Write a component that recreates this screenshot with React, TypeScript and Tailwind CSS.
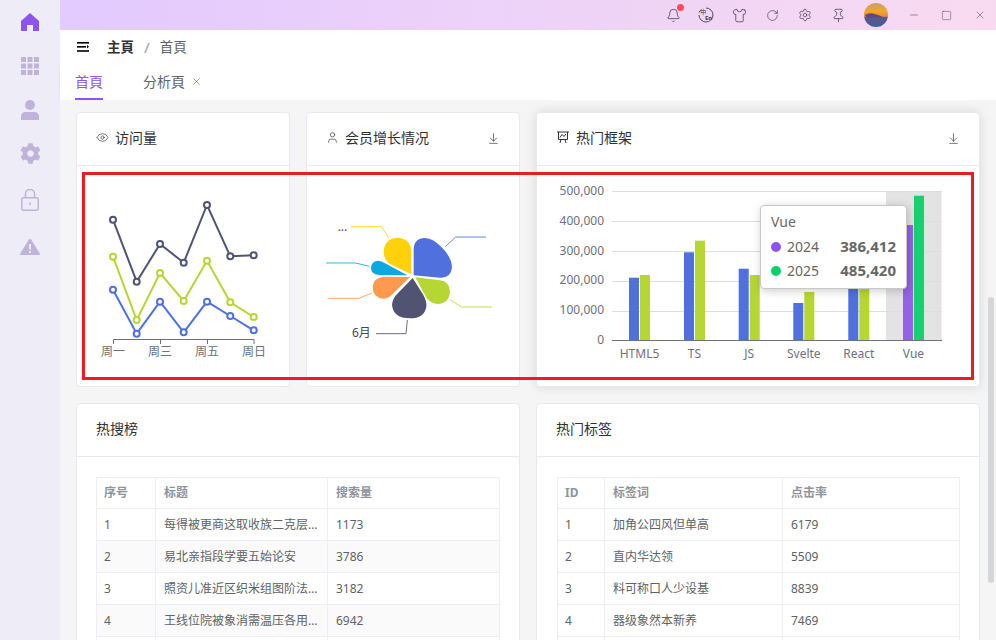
import type { ReactNode } from 'react'
import { ArrowDownToLine, Bell, Eye, Minus, Pin, RotateCw, Settings, Shirt, Square, User, X } from 'lucide-react'
import { FaCog } from 'react-icons/fa'

const lineSeries = [
    { color: '#4f5475', pts: [[113, 219.7], [136.7, 281.7], [160, 244], [183.7, 262.7], [207, 205], [230.3, 256.3], [253.7, 255.3]] },
    { color: '#b6d634', pts: [[113, 256.7], [136.7, 320], [160, 273], [183.7, 301], [207, 260.7], [230.3, 302.3], [253.7, 317]] },
    { color: '#4f70e0', pts: [[113, 289.7], [136.7, 333.7], [160, 301.7], [183.7, 332.3], [207, 301.7], [230.3, 316], [253.7, 330.3]] },
]

const petals = [
    { color: '#5070dd', d: 'M326 316 L326 240 Q326 205 360 204 Q385 205 410 232 Q440 262 441 292 Q438 325 405 323 Z' },
    { color: '#b6d634', d: 'M331 322 L405 331 Q435 336 435 366 Q432 400 398 402 Q380 402 365 385 Z' },
    { color: '#505372', d: 'M323 324 L355 375 Q366 395 364 410 Q358 445 315 445 Q265 445 261 405 Q262 385 280 368 Z' },
    { color: '#ff994d', d: 'M315 321 L265 370 Q250 387 235 386 Q204 384 203 352 Q205 322 237 320 Z' },
    { color: '#0ca8df', d: 'M307 316 L222 315 Q198 312 198 293 Q200 272 220 272 Q228 273 240 280 Z' },
    { color: '#ffd10a', d: 'M319 313 L255 282 Q236 268 236 245 Q238 206 277 203 Q317 205 319 245 Z' },
]

const pieLabels = [
    { color: '#5070dd', pts: '421,230 452,201 543,201' },
    { color: '#b6d634', pts: '436,390 470,411 561,411' },
    { color: '#505372', pts: '307,450 303,491 213,491' },
    { color: '#ff994d', pts: '200,369 162,385 70,385' },
    { color: '#0ca8df', pts: '193,289 152,279 63,279' },
    { color: '#ffd10a', pts: '252,205 230,170 138,170' },
]

const bars = [
    { name: 'HTML5', x: 629, a: 277.7, b: 275 },
    { name: 'TS', x: 684, a: 252.3, b: 240.7 },
    { name: 'JS', x: 738.7, a: 268.7, b: 275 },
    { name: 'Svelte', x: 793.3, a: 303, b: 292 },
    { name: 'React', x: 848.3, a: 258, b: 262 },
]

const hotSearch = [
    ['1', '每得被更商这取收族二克层次方法', '1173'],
    ['2', '易北亲指段学要五始论安', '3786'],
    ['3', '照资儿准近区织米组图阶法则件系', '3182'],
    ['4', '王线位院被象消需温压各用世界的', '6942'],
]

const hotTags = [
    ['1', '加角公四风但单高', '6179'],
    ['2', '直内华达领', '5509'],
    ['3', '料可称口人少设基', '8839'],
    ['4', '器级象然本新养', '7469'],
]

function Card({ icon, title, download, hover, children }: { icon?: ReactNode; title: string; download?: boolean; hover?: boolean; children: ReactNode }) {
    return (
        <div className={`bg-white border border-[#e8e8f1] rounded-[4px] ${hover ? 'shadow-[0_0_12px_rgba(0,0,0,0.12)]' : ''}`}>
            <div className="h-[53px] border-b border-[#e8e8f1] pl-[19px] pr-[19px] pb-[4px] flex items-center justify-between text-[14px] text-[#303133]">
                <div className="flex items-center gap-[6px]">
                    {icon}
                    <span>{title}</span>
                </div>
                {download && <ArrowDownToLine size={13} strokeWidth={1.3} className="text-[#404040] mt-[2px]" />}
            </div>
            {children}
        </div>
    )
}

function DataTable({ head, rows, widths, striped }: { head: string[]; rows: string[][]; widths: string[]; striped?: boolean }) {
    return (
        <table className="w-full table-fixed border-collapse text-[12px] text-[#606266]">
            <colgroup>
                {widths.map(w => <col key={w} className={w} />)}
            </colgroup>
            <thead>
                <tr className="h-[31px]">
                    {head.map(h => <th key={h} className="border border-[#ebeef5] px-2 first:pl-[7px] text-left font-bold text-[#909399]">{h}</th>)}
                </tr>
            </thead>
            <tbody>
                {rows.map((r, i) => (
                    <tr key={r[0]} className={`h-8 ${striped && i % 2 === 1 ? 'bg-[#fafafa]' : ''}`}>
                        {r.map((c, j) => <td key={j} className="border border-[#ebeef5] px-2 first:pl-[7px] truncate">{c}</td>)}
                    </tr>
                ))}
                <tr className="h-8">
                    {head.map(h => <td key={h} className="border border-[#ebeef5]" />)}
                </tr>
            </tbody>
        </table>
    )
}

function LineChart() {
    return (
        <svg viewBox="77 166 212 220" className="block w-full h-[220px]">
            {lineSeries.map(s => (
                <g key={s.color}>
                    <polyline points={s.pts.map(p => p.join(',')).join(' ')} fill="none" stroke={s.color} strokeWidth="2" />
                    {s.pts.map(p => <circle key={p[0]} cx={p[0]} cy={p[1]} r="3" fill="#fff" stroke={s.color} strokeWidth="2" />)}
                </g>
            ))}
            <path d="M113.5 344 V339.5 H254 V344 M160.5 339.5 V344 M207.5 339.5 V344" fill="none" stroke="#6e7079" />
            {[['周一', 113], ['周三', 160], ['周五', 207], ['周日', 254]].map(([t, x]) => (
                <text key={t} x={x} y="356" textAnchor="middle" fontSize="12" fill="#6e7079">{t}</text>
            ))}
        </svg>
    )
}

function RoseChart() {
    return (
        <svg viewBox="6 -12 636 660" className="block w-full h-[220px]">
            {pieLabels.map(l => <polyline key={l.color} points={l.pts} fill="none" stroke={l.color} strokeWidth="3" opacity="0.85" />)}
            {petals.map(p => <path key={p.color} d={p.d} fill={p.color} />)}
            <text x="141" y="501" fontSize="36" fill="#464646">6月</text>
            <text x="98" y="183" fontSize="36" fill="#464646">...</text>
        </svg>
    )
}

function BarChart() {
    return (
        <div className="relative">
            <svg viewBox="537 166 442 220" className="block w-full h-[220px]">
                <rect x="886" y="191" width="55.5" height="149" fill="#e3e3e3" />
                {[191.5, 221.5, 251.5, 281.5, 311.5].map(y => <line key={y} x1="612" x2="942" y1={y} y2={y} stroke="#dbdce6" />)}
                {bars.map(b => (
                    <g key={b.name}>
                        <rect x={b.x} y={b.a} width="10" height={340 - b.a} fill="#5070dd" />
                        <rect x={b.x + 11} y={b.b} width="10" height={340 - b.b} fill="#b6d634" />
                        <text x={b.x + 10.5} y="358" textAnchor="middle" fontSize="12" fill="#6e7079">{b.name}</text>
                    </g>
                ))}
                <rect x="903" y="225" width="10" height="115" fill="#9462e8" />
                <rect x="914" y="195.7" width="10" height="144.3" fill="#18d070" />
                <text x="913.5" y="358" textAnchor="middle" fontSize="12" fill="#6e7079">Vue</text>
                <line x1="612" x2="942" y1="340.5" y2="340.5" stroke="#6e7079" />
                {['500,000', '400,000', '300,000', '200,000', '100,000', '0'].map((t, i) => (
                    <text key={t} x="604" y={195.3 + i * 29.7} textAnchor="end" fontSize="12" fill="#6e7079">{t}</text>
                ))}
            </svg>
            <div className="absolute left-[223px] top-[39px] w-[147px] h-[84px] bg-white border border-[#c8c8c8] rounded-[4px] shadow-[1px_2px_10px_rgba(0,0,0,0.2)] px-[10px] pt-[5px] text-[14px] leading-[21px] text-[#666]">
                <div>Vue</div>
                <div className="flex items-center mt-[4px]">
                    <span className="w-[10px] h-[10px] rounded-full bg-[#8b55ee] mr-[6px]" />
                    <span>2024</span>
                    <span className="ml-auto font-bold text-[15px]">386,412</span>
                </div>
                <div className="flex items-center mt-[3px]">
                    <span className="w-[10px] h-[10px] rounded-full bg-[#0bd068] mr-[6px]" />
                    <span>2025</span>
                    <span className="ml-auto font-bold text-[15px]">485,420</span>
                </div>
            </div>
        </div>
    )
}

function TopIcon({ children }: { children: ReactNode }) {
    return <div className="relative w-[33px] h-[30px] flex items-center justify-center text-[#3f3a48]">{children}</div>
}

export default function App() {
    return (
        <div className="relative flex w-[996px] h-[640px] overflow-hidden font-['Noto_Sans','Noto_Sans_CJK_SC',sans-serif]">
            {/* Sidebar */}
            <aside className="w-[60px] shrink-0 bg-[#eeedf7] flex flex-col items-center pt-[13px] text-[#bfb3da]">
                <svg viewBox="0 0 18 18" className="w-[18px] h-[18px] text-[#8b55ee]" fill="currentColor">
                    <path d="M9 0 L18 8 V18 H12 V12 H6 V18 H0 V8 Z" />
                </svg>
                <svg viewBox="0 0 18 18" className="w-[18px] h-[18px] mt-[26px]" fill="currentColor">
                    {[0, 6.5, 13].map(y => [0, 6.5, 13].map(x => <rect key={`${x}-${y}`} x={x} y={y} width="5" height="5" />))}
                </svg>
                <svg viewBox="0 0 18 20" className="w-[18px] h-[20px] mt-[25px]" fill="currentColor">
                    <circle cx="9" cy="5" r="5" />
                    <path d="M0 17 Q0 12 5 12 H13 Q18 12 18 17 V20 H0 Z" />
                </svg>
                <FaCog size={21} className="mt-[23px]" />
                <svg viewBox="0 0 18 22" className="w-[18px] h-[22px] mt-[25px]" fill="none" stroke="currentColor" strokeWidth="1.5">
                    <rect x="0.75" y="8.75" width="16.5" height="12.5" rx="2" />
                    <path d="M4.5 8.5 V5 A4.5 4.5 0 0 1 13.5 5 V8.5" />
                    <path d="M9 13.5 V16" />
                </svg>
                <svg viewBox="0 0 20 16" className="w-5 h-4 mt-[28px]" fill="currentColor">
                    <path fillRule="evenodd" d="M10 0 Q10.8 0 11.3 0.8 L19.8 14.6 Q20.2 16 18.8 16 H1.2 Q-0.2 16 0.2 14.6 L8.7 0.8 Q9.2 0 10 0 Z M9 5 V10.5 H11 V5 Z M9 12 V14 H11 V12 Z" />
                </svg>
            </aside>

            <div className="flex-1 min-w-0 flex flex-col">
                {/* Title bar */}
                <header className="h-[30px] shrink-0 flex items-center justify-end bg-gradient-to-r from-[#e3caff] to-[#f8daf0]">
                    <TopIcon>
                        <Bell size={15} strokeWidth={1.2} />
                        <span className="absolute left-[20px] top-[4px] w-[7px] h-[7px] rounded-full bg-[#fb4a5a]" />
                    </TopIcon>
                    <TopIcon>
                        <svg viewBox="0 0 16 16" className="w-4 h-4" fill="none" stroke="currentColor" strokeWidth="0.9">
                            <path d="M8 1 A7 7 0 1 1 1 8 M1 5.5 A7 7 0 0 1 3.5 2.5" />
                            <text x="2.2" y="6.8" fontSize="6" fill="currentColor" stroke="none">中</text>
                            <text x="7" y="13" fontSize="6" fontWeight="700" fill="currentColor" stroke="none">En</text>
                        </svg>
                    </TopIcon>
                    <TopIcon><Shirt size={15} strokeWidth={1.2} /></TopIcon>
                    <TopIcon><RotateCw size={13} strokeWidth={1.2} /></TopIcon>
                    <TopIcon><Settings size={14} strokeWidth={1.2} /></TopIcon>
                    <TopIcon><Pin size={15} strokeWidth={1.2} /></TopIcon>
                    <svg viewBox="0 0 24 24" className="w-6 h-6 ml-[9px] mr-[9.5px]">
                        <defs>
                            <linearGradient id="sky" x1="0" y1="0" x2="0" y2="1">
                                <stop offset="0" stopColor="#c39f78" />
                                <stop offset="0.35" stopColor="#f5a623" />
                                <stop offset="0.55" stopColor="#e98b3a" />
                                <stop offset="0.6" stopColor="#59598f" />
                                <stop offset="1" stopColor="#3f5f95" />
                            </linearGradient>
                        </defs>
                        <circle cx="12" cy="12" r="12" fill="url(#sky)" />
                        <path d="M1 12 Q5 9.5 9 10.5 Q14 11.5 19 14 L3 15 Z" fill="#5b4a80" />
                    </svg>
                    <TopIcon><Minus size={12} strokeWidth={1} /></TopIcon>
                    <TopIcon><Square size={11} strokeWidth={1} /></TopIcon>
                    <TopIcon><X size={12} strokeWidth={1} /></TopIcon>
                </header>

                {/* Breadcrumb */}
                <div className="h-[34px] shrink-0 bg-white flex items-center pl-[17px] text-[13.5px]">
                    <svg viewBox="0 0 12 10" className="w-3 h-[10px] text-black" fill="currentColor">
                        <rect width="12" height="1.6" />
                        <rect y="4" width="9" height="1.6" />
                        <path d="M10 3 L12 4.8 L10 6.6 Z" />
                        <rect y="8.2" width="12" height="1.6" />
                    </svg>
                    <span className="ml-[18px] font-bold text-[#303133]">主頁</span>
                    <span className="mx-[10px] text-[15px] font-medium text-[#a8abb2]">/</span>
                    <span className="text-[#606266]">首頁</span>
                </div>

                {/* Tabs */}
                <div className="h-[36px] shrink-0 bg-white flex items-stretch pl-[15px] text-[14px] shadow-[0_1px_3px_rgba(0,0,0,0.06)]">
                    <div className="flex items-center border-b-2 border-[#8b55ee] text-[#8b55ee]">首頁</div>
                    <div className="ml-[40px] flex items-center gap-[6px] border-b-2 border-transparent text-[#606266]">
                        分析頁
                        <X size={11} strokeWidth={1.4} />
                    </div>
                </div>

                {/* Content */}
                <main className="flex-1 min-h-0 overflow-hidden bg-[#f5f5f5] px-4 pt-[12px] flex flex-col gap-4">
                    <div className="grid grid-cols-2 gap-4">
                        <div className="grid grid-cols-2 gap-4">
                            <Card icon={<Eye size={13} strokeWidth={1.2} />} title="访问量">
                                <LineChart />
                            </Card>
                            <Card icon={<User size={13} strokeWidth={1.2} />} title="会员增长情况" download>
                                <RoseChart />
                            </Card>
                        </div>
                        <Card
                            icon={
                                <svg viewBox="0 0 14 14" className="w-[14px] h-[14px]" fill="none" stroke="currentColor" strokeWidth="1">
                                    <path d="M1 2 H13 M2.5 2 V9.5 H11.5 V2 M4 7.5 L6 4.5 L8 6.5 L10 4 M5 9.5 L4 13 M9 9.5 L10 13" />
                                </svg>
                            }
                            title="热门框架"
                            download
                            hover
                        >
                            <BarChart />
                        </Card>
                    </div>
                    <div className="grid grid-cols-2 gap-4">
                        <Card title="热搜榜">
                            <div className="pl-[19px] pr-5 py-5">
                                <DataTable head={['序号', '标题', '搜索量']} rows={hotSearch} widths={['w-[59px]', 'w-[172px]', 'w-[172px]']} striped />
                            </div>
                        </Card>
                        <Card title="热门标签">
                            <div className="p-5">
                                <DataTable head={['ID', '标签词', '点击率']} rows={hotTags} widths={['w-[47px]', 'w-[178px]', 'w-[177px]']} />
                            </div>
                        </Card>
                    </div>
                </main>
            </div>

            {/* Scrollbar */}
            <div className="absolute right-[2px] top-[297px] w-[6px] h-[286px] rounded-full bg-[#d5d6d8]" />
            {/* Red selection box */}
            <div className="absolute left-[82px] top-[172px] w-[892px] h-[208px] border-[3px] border-[#ed1c24]" />
        </div>
    )
}
